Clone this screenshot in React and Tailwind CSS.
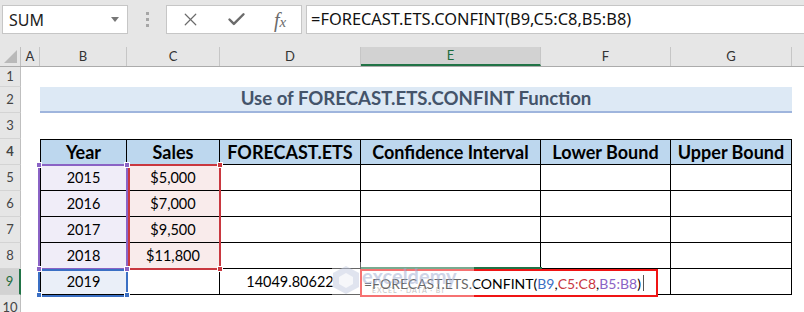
import React from "react";
import { X, Check } from "lucide-react";

const cell = "font-['Lato',sans-serif]";
const headerCol = [
  { k: "A", w: "w-[19px]" },
  { k: "B", w: "w-[87px]" },
  { k: "C", w: "w-[93px]" },
  { k: "D", w: "w-[141px]" },
  { k: "E", w: "w-[180px]", active: true },
  { k: "F", w: "w-[130px]" },
  { k: "G", w: "w-[121px]" },
];

const data = [
  ["2015", "$5,000"],
  ["2016", "$7,000"],
  ["2017", "$9,500"],
  ["2018", "$11,800"],
];

function RowHead({ n, active }) {
  return (
    <div
      className={
        "w-[21px] shrink-0 h-full flex items-center justify-center text-[13px] border-b border-[#d4d4d4] " +
        cell +
        (active
          ? " bg-[#d2d2d2] text-[#1e6b3c] border-r-2 border-r-[#217346]"
          : " bg-[#e6e6e6] text-[#444] border-r border-r-[#bfbfbf]")
      }
    >
      {n}
    </div>
  );
}

function Handle({ x, y, color }) {
  return (
    <div
      className={"absolute w-[6px] h-[6px] border border-white " + color}
      style={{ left: x - 3, top: y - 3 }}
    />
  );
}

export default function App() {
  return (
    <div className="relative w-[804px] h-[312px] overflow-hidden bg-white flex flex-col">
      {/* formula bar */}
      <div className="h-[47px] shrink-0 bg-[#e6e6e6] flex items-start pt-[5px]">
        <div className="ml-[2px] w-[126px] h-[29px] bg-white border border-[#c6c6c6] flex items-center pl-[6px] pr-[8px]">
          <span className="text-[16px] text-[#222] font-['Noto_Sans',sans-serif] flex-1">SUM</span>
          <svg width="8" height="5" viewBox="0 0 8 5">
            <polygon points="0,0 8,0 4,5" fill="#777" />
          </svg>
        </div>
        <div className="w-[38px] h-[29px] flex flex-col items-center justify-center gap-[3px]">
          <span className="w-[3px] h-[3px] bg-[#a6a6a6]" />
          <span className="w-[3px] h-[3px] bg-[#a6a6a6]" />
          <span className="w-[3px] h-[3px] bg-[#a6a6a6]" />
        </div>
        <div className="w-[136px] h-[29px] bg-white border border-[#c6c6c6] flex items-center">
          <div className="w-[46px] flex justify-center">
            <X size={21} strokeWidth={1.4} color="#6b6b6b" />
          </div>
          <div className="w-[46px] flex justify-center">
            <Check size={21} strokeWidth={2.8} color="#6b6b6b" />
          </div>
          <div className="w-[42px] flex justify-center">
            <span className="italic text-[20px] leading-none text-[#6b6b6b] font-['Liberation_Serif',serif]">
              f<span className="text-[15px]">x</span>
            </span>
          </div>
        </div>
        <div className="ml-[4px] flex-1 h-[29px] bg-white border border-[#c6c6c6] border-r-0 flex items-center pl-[4px]">
          <span className="text-[16.4px] text-[#111] font-['Noto_Sans',sans-serif]">
            =FORECAST.ETS.CONFINT(B9,C5:C8,B5:B8)
          </span>
        </div>
      </div>

      {/* column headers */}
      <div className="h-[20px] shrink-0 flex bg-[#e6e6e6] border-b border-[#ababab]">
        <div className="w-[21px] shrink-0 relative border-r border-[#bfbfbf]">
          <svg className="absolute right-[3px] bottom-[3px]" width="13" height="13" viewBox="0 0 13 13">
            <polygon points="13,0 13,13 0,13" fill="#b9b9b9" />
          </svg>
        </div>
        {headerCol.map((c) => (
          <div
            key={c.k}
            className={
              c.w +
              " shrink-0 flex items-center justify-center text-[13px] border-r border-[#c6c6c6] " +
              cell +
              (c.active ? " bg-[#d2d2d2] text-[#1e6b3c] border-b-2 border-b-[#217346]" : " text-[#333]")
            }
          >
            {c.k}
          </div>
        ))}
        <div className="flex-1" />
      </div>

      {/* row 1 */}
      <div className="h-[20px] shrink-0 flex">
        <RowHead n={1} />
      </div>

      {/* row 2 - title */}
      <div className="h-[26px] shrink-0 flex">
        <RowHead n={2} />
        <div className="w-[19px] shrink-0" />
        <div
          className={
            "w-[752px] shrink-0 bg-[#dde9f5] border-b-2 border-[#9fb5dd] flex items-center justify-center text-[18.6px] font-bold text-[#44546a] " +
            cell
          }
        >
          Use of FORECAST.ETS.CONFINT Function
        </div>
      </div>

      {/* row 3 */}
      <div className="h-[26px] shrink-0 flex">
        <RowHead n={3} />
      </div>

      {/* row 4 - table header */}
      <div className={"h-[26px] shrink-0 flex text-[18px] font-bold text-black " + cell}>
        <RowHead n={4} />
        <div className="w-[19px] shrink-0" />
        <div className="w-[87px] shrink-0 bg-[#bdd7ee] border border-black flex items-center justify-center">Year</div>
        <div className="w-[93px] shrink-0 bg-[#bdd7ee] border-y border-r border-black flex items-center justify-center">Sales</div>
        <div className="w-[141px] shrink-0 bg-[#bdd7ee] border-y border-r border-black flex items-center justify-center">FORECAST.ETS</div>
        <div className="w-[180px] shrink-0 bg-[#bdd7ee] border-y border-r border-black flex items-center justify-center">Confidence Interval</div>
        <div className="w-[130px] shrink-0 bg-[#bdd7ee] border-y border-r border-black flex items-center justify-center">Lower Bound</div>
        <div className="w-[121px] shrink-0 bg-[#bdd7ee] border-y border-r border-black flex items-center justify-center">Upper Bound</div>
      </div>

      {/* rows 5-8 */}
      {data.map(([year, sales], i) => (
        <div key={year} className={"h-[26px] shrink-0 flex text-[14.5px] text-black " + cell}>
          <RowHead n={5 + i} />
          <div className="w-[19px] shrink-0" />
          <div className="w-[87px] shrink-0 bg-[#f0edf8] border-x border-b border-black flex items-center justify-center">{year}</div>
          <div className="w-[93px] shrink-0 bg-[#f9ebeb] border-r border-b border-black flex items-center justify-center">{sales}</div>
          <div className="w-[141px] shrink-0 border-r border-b border-black" />
          <div className="w-[180px] shrink-0 border-r border-b border-black" />
          <div className="w-[130px] shrink-0 border-r border-b border-black" />
          <div className="w-[121px] shrink-0 border-r border-b border-black" />
        </div>
      ))}

      {/* row 9 */}
      <div className={"h-[26px] shrink-0 flex text-[14.5px] text-black " + cell}>
        <RowHead n={9} active />
        <div className="w-[19px] shrink-0" />
        <div className="w-[87px] shrink-0 bg-[#eaeff8] border-x border-b border-black flex items-center justify-center">2019</div>
        <div className="w-[93px] shrink-0 border-r border-b border-black" />
        <div className="w-[141px] shrink-0 border-r border-b border-black flex items-center justify-center">14049.80622</div>
        <div className="w-[180px] shrink-0 border-r border-b border-black" />
        <div className="w-[130px] shrink-0 border-r border-b border-black" />
        <div className="w-[121px] shrink-0 border-r border-b border-black" />
      </div>

      {/* row 10 */}
      <div className="h-[26px] shrink-0 flex">
        <RowHead n={10} />
      </div>

      {/* range highlights */}
      <div className="absolute left-[38px] top-[164px] w-[90px] h-[106px] border-2 border-[#8a63c5]" />
      <div className="absolute left-[128px] top-[164px] w-[93px] h-[106px] border-2 border-[#c9373f]" />
      <div className="absolute left-[38px] top-[269px] w-[90px] h-[28px] border-2 border-[#3a6fc4]" />
      <Handle x={220} y={165} color="bg-[#c9373f]" />
      <Handle x={220} y={269} color="bg-[#c9373f]" />
      <Handle x={39} y={165} color="bg-[#8a63c5]" />
      <Handle x={127} y={165} color="bg-[#8a63c5]" />
      <Handle x={39} y={269} color="bg-[#8a63c5]" />
      <Handle x={127} y={269} color="bg-[#8a63c5]" />
      <Handle x={39} y={295} color="bg-[#3a6fc4]" />
      <Handle x={127} y={295} color="bg-[#3a6fc4]" />

      {/* active cell top edge */}
      <div className="absolute left-[361px] top-[267px] w-[181px] h-[2px] bg-[#217346]" />

      {/* in-cell editor */}
      <div
        className={
          "absolute left-[360px] top-[269px] w-[298px] h-[28px] bg-white border-2 border-[#f01414] flex items-center pl-[2px] text-[14px] text-black " +
          cell
        }
      >
        <span>=FORECAST.ETS.CONFINT(</span>
        <span className="text-[#3a6fc4]">B9</span>
        <span>,</span>
        <span className="text-[#c9373f]">C5:C8</span>
        <span>,</span>
        <span className="text-[#8a63c5]">B5:B8</span>
        <span>)</span>
        <span className="ml-[2px] w-px h-[16px] bg-[#555]" />
      </div>

      {/* watermark */}
      <div className="absolute left-[332px] top-[262px] w-[142px] h-[36px] bg-white/40 flex items-center gap-[2px] pointer-events-none">
        <svg width="28" height="30" viewBox="0 0 28 30" className="opacity-50">
          <polygon points="14,1 27,8 27,22 14,29 1,22 1,8" fill="#c3cbe0" />
          <polygon points="14,8 21,12 21,19 14,23 7,19 7,12" fill="#eef0f6" />
        </svg>
        <div className="flex flex-col leading-none opacity-50">
          <span className="text-[20px] font-bold text-[#9fabd0] font-['Lato',sans-serif]">exceldemy</span>
          <span className="text-[7px] tracking-[1px] text-[#8a8a8a] font-['Lato',sans-serif] mt-[1px] ml-[10px]">
            EXCEL · DATA · BI
          </span>
        </div>
      </div>
    </div>
  );
}
